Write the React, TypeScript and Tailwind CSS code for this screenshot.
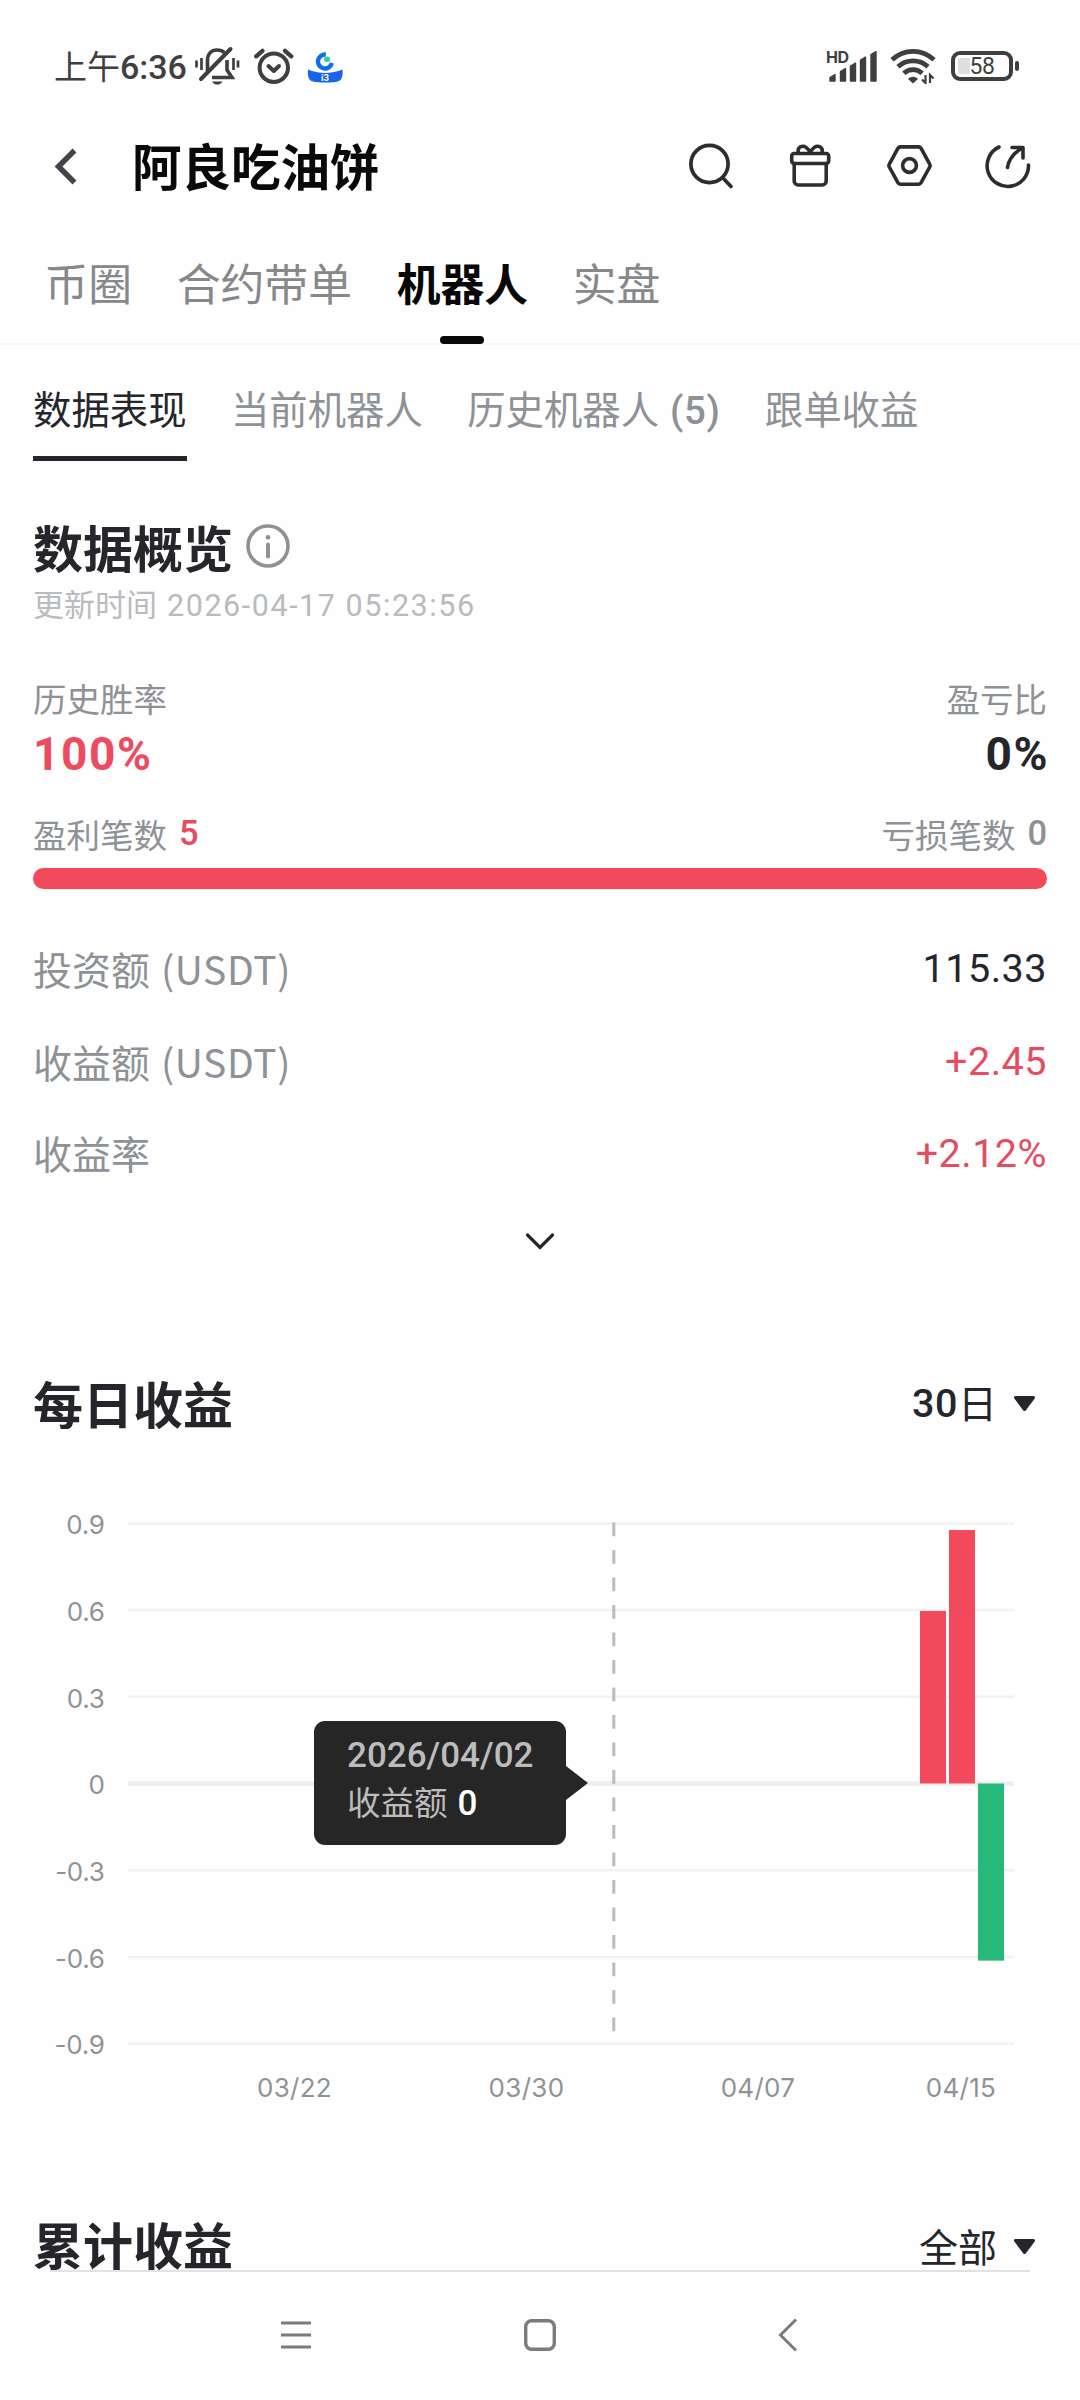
import type { ReactNode } from 'react';
import { clsx } from 'clsx';

type Tab = { label: string; count?: number; active?: boolean };

const mainTabs: Tab[] = [
  { label: '币圈' },
  { label: '合约带单' },
  { label: '机器人', active: true },
  { label: '实盘' },
];

const subTabs: Tab[] = [
  { label: '数据表现', active: true },
  { label: '当前机器人' },
  { label: '历史机器人', count: 5 },
  { label: '跟单收益' },
];

export default function App() {
  return (
    <div className="flex flex-col w-[1080px] h-[2400px] overflow-hidden bg-[#fefefe] text-[#25262b] leading-none whitespace-nowrap font-['Inter','Noto_Sans_CJK_SC',sans-serif]">
      <StatusBar />
      <Header />
      <MainTabs />
      <SubTabs />
      <main className="flex-1 min-h-0 px-[33px]">
        <Overview />
        <DailyProfit />
        <section className="flex items-center justify-between h-[50px] mt-[101px]">
          <SectionTitle>累计收益</SectionTitle>
          <Picker>全部</Picker>
        </section>
      </main>
      <NavBar />
    </div>
  );
}

function StatusBar() {
  return (
    <div className="flex items-center justify-between h-[132px] shrink-0 pl-[54px] pr-[61px] text-[#3f3f3f]">
      <div className="flex items-center">
        <span className="w-[141px] pt-px text-[34px] font-medium font-['Roboto','Noto_Sans_CJK_SC',sans-serif]">
          <span className="text-[33px] font-normal">上午</span>6:36
        </span>
        <MutedBellIcon />
        <AlarmIcon />
        <AppBadgeIcon />
      </div>
      <div className="flex items-center">
        <SignalIcon />
        <WifiIcon />
        <Battery level={58} />
      </div>
    </div>
  );
}

function Battery({ level }: { level: number }) {
  return (
    <div className="flex items-center ml-[15px]">
      <div className="relative flex items-center justify-center w-[62px] h-[30px] rounded-[9px] border-4 border-[#3f3f3f]">
        <div className="absolute left-[3px] top-[3px] bottom-[3px] rounded-[2px] bg-[#dedede]" style={{ width: (level / 100) * 48 }} />
        <span className="relative h-[20px] bg-[#fefefe] text-[23px] leading-[20px] tracking-[-0.5px] pt-px font-['Roboto',sans-serif]">{level}</span>
      </div>
      <div className="w-1 h-[10px] ml-[2px] rounded-full bg-[#3f3f3f]" />
    </div>
  );
}

function Header() {
  return (
    <header className="flex items-center h-[70px] shrink-0 pl-[54px] pr-[48px]">
      <svg width="24" height="40" viewBox="0 0 24 40" fill="none" stroke="#44454a" strokeWidth="5.5">
        <path d="M20.5 3.5 4.5 19.5l16 16" />
      </svg>
      <h1 className="ml-[54px] pt-[4px] text-[49.5px] font-bold text-[#090909]">阿良吃油饼</h1>
      <div className="flex items-center gap-[51px] ml-auto mb-[3px] text-[#2c2d2e]">
        <SearchIcon />
        <GiftIcon />
        <HexIcon />
        <ShareIcon />
      </div>
    </header>
  );
}

function MainTabs() {
  return (
    <nav className="flex gap-[44.7px] h-[143px] shrink-0 pl-[44.5px] border-b-2 border-[#f6f6f7] text-[43.8px]">
      {mainTabs.map((tab) => (
        <div
          key={tab.label}
          className={clsx('relative flex justify-center pt-[62px]', tab.active ? 'font-bold text-[#070707]' : 'text-[#86888a]')}
        >
          {tab.label}
          {tab.active && <span className="absolute bottom-[-1px] w-[44px] h-2 rounded-full bg-[#070707]" />}
        </div>
      ))}
    </nav>
  );
}

function SubTabs() {
  return (
    <nav className="flex gap-[44.3px] h-[116px] shrink-0 pl-[33px] text-[38.4px]">
      {subTabs.map((tab) => (
        <div
          key={tab.label}
          className={clsx('pt-[46px] border-b-[5px]', tab.active ? 'border-[#25262b]' : 'border-transparent text-[#8e9195]')}
        >
          {tab.label}
          {tab.count && <span className="ml-[11px] font-medium tracking-[0.6px] font-['Roboto',sans-serif]">({tab.count})</span>}
        </div>
      ))}
    </nav>
  );
}

function SectionTitle({ children }: { children: ReactNode }) {
  return <h2 className="pt-[2px] text-[50px] font-bold">{children}</h2>;
}

function Picker({ children }: { children: ReactNode }) {
  return (
    <button className="flex items-center mr-[11px] pt-[2px] text-[39px] font-normal">
      {children}
      <svg className="ml-[16px]" width="23" height="18" viewBox="0 0 23 18" fill="currentColor" stroke="currentColor" strokeWidth="3" strokeLinejoin="round">
        <path d="M2.5 2.5h18l-9 12z" />
      </svg>
    </button>
  );
}

function Overview() {
  return (
    <section className="pt-[63px]">
      <div className="flex items-center gap-[13px] h-[50px]">
        <SectionTitle>数据概览</SectionTitle>
        <svg className="mb-[7px]" width="44" height="44" viewBox="0 0 44 44" fill="none" stroke="#8f9295" strokeWidth="3.6" strokeLinecap="round">
          <circle cx="22" cy="22" r="20" />
          <path d="M22 20.5v12" strokeWidth="4" />
          <circle cx="22" cy="13.3" r="2.4" fill="#8f9295" stroke="none" />
        </svg>
      </div>
      <p className="h-[30px] mt-[15px] text-[31px] text-[#b9bbbe]">
        更新时间<span className="ml-[10px] text-[30.5px] tracking-[1.55px] font-['Roboto',sans-serif]">2026-04-17 05:23:56</span>
      </p>

      <div className="flex justify-between mt-[65px] text-[33.5px] text-[#8e9195]">
        <span>历史胜率</span>
        <span>盈亏比</span>
      </div>
      <div className="flex justify-between mt-[14px] -mr-[2px] text-[46px] leading-[44px] font-bold tracking-[1.6px] font-['Roboto',sans-serif]">
        <span className="text-[#ee4b60]">100%</span>
        <span>0%</span>
      </div>
      <div className="flex justify-between mt-[43px] text-[33.5px] text-[#8e9195]">
        <span>
          盈利笔数<span className="relative -top-[3px] ml-[12px] text-[34.5px] font-medium font-['Roboto',sans-serif] text-[#e54c60]">5</span>
        </span>
        <span>
          亏损笔数<span className="relative -top-[3px] ml-[12px] text-[34.5px] font-medium font-['Roboto',sans-serif]">0</span>
        </span>
      </div>
      <div className="h-[21px] mt-[15px] rounded-full bg-[#f2495d]" />

      <Stat className="mt-[60px]" label="投资额" unit="(USDT)" value="115.33" />
      <Stat className="mt-[53px]" label="收益额" unit="(USDT)" value="+2.45" gain />
      <Stat className="mt-[52px]" label="收益率" value="+2.12%" gain />

      <svg className="mx-auto mt-[58px]" width="32" height="20" viewBox="0 0 32 20" fill="none" stroke="#25262b" strokeWidth="3.2" strokeLinecap="round">
        <path d="M3.5 3 16 15.5 28.5 3" />
      </svg>
    </section>
  );
}

type StatProps = { label: string; unit?: string; value: string; gain?: boolean; className?: string };

function Stat({ label, unit, value, gain, className }: StatProps) {
  return (
    <div className={clsx('flex items-center justify-between h-[40px] text-[39px]', className)}>
      <span className="text-[#8e9195]">
        {label}
        {unit && <span className="ml-[11px] tracking-[0.6px] font-['Noto_Sans_CJK_SC',sans-serif]">{unit}</span>}
      </span>
      <span className={clsx("text-[39.5px] font-[450] tracking-[0.5px] font-['Roboto',sans-serif]", gain && 'text-[#e54c60]')}>{value}</span>
    </div>
  );
}

const PLOT = { left: 128, right: 1014, zero: 283.5, unit: 86.7 / 0.3 };
const yTicks = [0.9, 0.6, 0.3, 0, -0.3, -0.6, -0.9];
const xTicks = [
  { label: '03/22', x: 294.5 },
  { label: '03/30', x: 526.5 },
  { label: '04/07', x: 758 },
  { label: '04/15', x: 961 },
];
const bars = [
  { x: 920, value: 0.597 },
  { x: 949, value: 0.877 },
  { x: 978, value: -0.613 },
];

const toY = (v: number) => PLOT.zero - v * PLOT.unit;

function DailyProfit() {
  return (
    <section className="mt-[128px]">
      <div className="flex items-center justify-between h-[50px]">
        <SectionTitle>每日收益</SectionTitle>
        <div className="mb-[5px]">
          <Picker>
            <span className="text-[39.5px] font-medium tracking-[0.5px] font-['Roboto',sans-serif]">30</span>日
          </Picker>
        </div>
      </div>
      <div className="relative mt-[70px] -ml-[33px] w-[1080px] h-[620px]">
        <svg width="1080" height="620" viewBox="0 0 1080 620" fontSize="26" fill="#909396">
          {yTicks.map((t) => (
            <g key={t}>
              <line x1={PLOT.left} x2={PLOT.right} y1={toY(t)} y2={toY(t)} stroke={t === 0 ? '#ecedf0' : '#f0f1f4'} strokeWidth={t === 0 ? 4.5 : 2.5} />
              <text x="104.5" y={toY(t) + 10.8} textAnchor="end" letterSpacing="-0.3">
                {String(t)}
              </text>
            </g>
          ))}
          {xTicks.map((t) => (
            <text key={t.label} x={t.x} y="596.5" textAnchor="middle" letterSpacing="0.3">
              {t.label}
            </text>
          ))}
          <line x1="613.8" x2="613.8" y1="22.5" y2="532" stroke="#babcc0" strokeWidth="3" strokeDasharray="13.7 13.8" />
          {bars.map((b) => (
            <rect
              key={b.x}
              x={b.x}
              y={Math.min(toY(b.value), PLOT.zero)}
              width="26"
              height={Math.abs(b.value) * PLOT.unit}
              fill={b.value > 0 ? '#f2495d' : '#26b979'}
            />
          ))}
        </svg>
        <Tooltip />
      </div>
    </section>
  );
}

function Tooltip() {
  return (
    <div className="absolute left-[314px] top-[221px] flex items-center">
      <div className="w-[252px] h-[124px] rounded-[11px] pt-[18px] pl-[33px] bg-[#262626] text-[#bcbcbc]">
        <div className="text-[35px] leading-[34px] font-medium font-['Roboto',sans-serif]">2026/04/02</div>
        <div className="mt-[13px] text-[33.5px]">
          收益额<span className="ml-[10px] text-[35px] font-medium font-['Roboto',sans-serif] text-white">0</span>
        </div>
      </div>
      <svg width="22" height="34" viewBox="0 0 22 34" fill="#262626">
        <path d="M0 0 22 17 0 34z" />
      </svg>
    </div>
  );
}

function NavBar() {
  return (
    <footer className="flex h-[130px] shrink-0 flex-col items-center text-[#7b7b7b]">
      <div className="w-[980px] h-[2px] bg-[#e2e2e2]" />
      <div className="flex w-full pt-[46px]">
        <svg className="ml-[280px]" width="32" height="34" viewBox="0 0 32 34" stroke="currentColor" strokeWidth="3">
          <path d="M1 5h30M1 17h30M1 29h30" />
        </svg>
        <svg className="ml-[211px]" width="34" height="34" viewBox="0 0 34 34" fill="none" stroke="currentColor" strokeWidth="3.4">
          <rect x="2.7" y="2.7" width="28.6" height="28.6" rx="6" />
        </svg>
        <svg className="ml-[220px]" width="22" height="34" viewBox="0 0 22 34" fill="none" stroke="currentColor" strokeWidth="3">
          <path d="M19 1.5 3.5 17 19 32.5" />
        </svg>
      </div>
    </footer>
  );
}

function SearchIcon() {
  return (
    <svg width="48" height="48" viewBox="0 0 48 48" fill="none" stroke="currentColor" strokeWidth="3.7" strokeLinecap="round">
      <circle cx="22.5" cy="22" r="18.6" />
      <path d="m36 36 8 8.5" />
    </svg>
  );
}

function GiftIcon() {
  return (
    <svg width="48" height="48" viewBox="0 0 48 48" fill="none" stroke="currentColor" strokeWidth="3.6" strokeLinecap="round" strokeLinejoin="round">
      <rect x="5.7" y="11.5" width="37" height="10" rx="2.5" />
      <path d="M8.2 21.5V39a4 4 0 0 0 4 4h24a4 4 0 0 0 4-4V21.5" />
      <path d="M12.5 11C11 6.5 14 4.2 17 4.2c3.5 0 5 3 7.2 5.8 2.2-2.8 3.7-5.8 7.2-5.8 3 0 6 2.3 4.5 6.8" />
    </svg>
  );
}

function HexIcon() {
  return (
    <svg width="48" height="48" viewBox="0 0 48 48" fill="none" stroke="currentColor" strokeWidth="3.6" strokeLinejoin="round">
      <path d="M15.5 4.9h18a3 3 0 0 1 2.6 1.5l8.6 15.7a3 3 0 0 1 0 2.9l-8.6 15.7a3 3 0 0 1-2.6 1.5h-18a3 3 0 0 1-2.6-1.5L4.3 25a3 3 0 0 1 0-2.9l8.6-15.7a3 3 0 0 1 2.6-1.5z" />
      <circle cx="24.5" cy="23.5" r="6.9" />
    </svg>
  );
}

function ShareIcon() {
  return (
    <svg width="48" height="48" viewBox="0 0 48 48" fill="none" stroke="currentColor" strokeWidth="3.6" strokeLinecap="round" strokeLinejoin="round">
      <path d="M15 5A20.7 20.7 0 1 0 44.5 23" />
      <path d="M23.5 25.5C24.5 18.5 30 11 38 6" />
      <path d="M28 5.5h11V16" />
    </svg>
  );
}

function MutedBellIcon() {
  return (
    <svg width="45" height="40" viewBox="0 0 45 40" fill="none" stroke="currentColor" strokeWidth="3.6">
      <path d="M12.5 25V14.5C12.5 7.5 16.5 4 22 4c3 0 5.5.8 7.5 2.8" />
      <path d="M32 14v10l5 7.5H17" />
      <path d="M6 33 35.5 3" strokeWidth="4" strokeLinecap="round" />
      <path d="M17 35.5h10.5c-1.5 2.5-3.500 3-5.200 3s-3.800-.5-5.300-3z" fill="currentColor" stroke="none" />
      <path d="M1.5 14.5v7M6.5 12v12M38.5 12v12M43 14.5v7" strokeWidth="2.7" />
    </svg>
  );
}

function AlarmIcon() {
  return (
    <svg className="ml-[13px]" width="42" height="38" viewBox="0 0 42 38" fill="none" stroke="currentColor" strokeWidth="4" strokeLinecap="round">
      <circle cx="20.8" cy="20.7" r="14.2" />
      <path d="m15.5 19 5.3 5 5.2-5" strokeLinejoin="round" />
      <path d="M3.2 9.3 9.5 3.8M38.3 9.3 32 3.8" strokeWidth="4.3" />
    </svg>
  );
}

function AppBadgeIcon() {
  return (
    <div className="relative ml-[12px] mt-[4px] w-[36px] h-[32px]">
      <svg width="36" height="32" viewBox="0 0 36 32" fill="none">
        <path d="M18.8 2.6a7 7 0 1 0 6 8.5" stroke="#0f6cf0" strokeWidth="4.4" />
        <rect x="17" y="4.5" width="6" height="5.5" rx="2" fill="#36cfa0" />
        <path d="M1 17.5c10 4.5 24 4.5 34.5 0 .5 6-.5 10-3.5 11.5-3.5 2-23.5 2-27.5 0C1.5 27.5.5 23.5 1 17.5z" fill="#1763ec" />
      </svg>
      <span className="absolute left-0 right-0 bottom-[2px] text-center text-[9px] font-bold text-white">i3</span>
    </div>
  );
}

function SignalIcon() {
  return (
    <div className="relative w-[51px] h-[32px]">
      <span className="absolute -left-px -top-px text-[16px] font-bold tracking-[-0.5px]">HD</span>
      <svg width="51" height="32" viewBox="0 0 51 32" fill="currentColor" stroke="currentColor" strokeWidth="1.4" strokeLinejoin="round">
        <path d="M3 27.5l5-3V31H3zM13.5 21.5l5-3V31h-5zM23.5 16l5-3v18h-5zM33.5 10l5-3v24h-5zM44 4.5l5-3V31h-5z" />
      </svg>
    </div>
  );
}

function WifiIcon() {
  return (
    <svg className="ml-[12px]" width="46" height="36" viewBox="0 0 46 36" fill="none" stroke="currentColor" strokeWidth="4.8">
      <path d="M2 11.8C14 .5 32 .5 44 11.8" />
      <path d="M8 18.7c8.5-7.8 21.5-7.8 30 0" />
      <path d="M13.8 25.3c5.5-5 12.9-5 18.4 0" />
      <path d="M18 31c3-3 7-3 10 0l-5 4.5z" fill="currentColor" stroke="none" />
      <path d="M35.5 27v8L32 31.5M40 35v-8l3.5 3.5" strokeWidth="2.2" />
    </svg>
  );
}
